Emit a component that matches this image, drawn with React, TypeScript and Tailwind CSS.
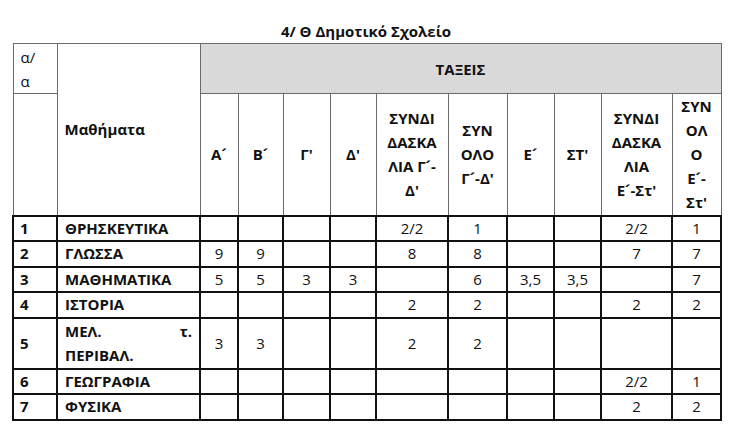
const COLS = [44, 143, 38, 45, 47, 46, 72, 59, 47, 47, 71, 49];

type Row = { n: string; name: React.ReactNode; v: string[]; tall?: boolean };

const ROWS: Row[] = [
  { n: "1", name: "ΘΡΗΣΚΕΥΤΙΚΑ", v: ["", "", "", "", "2/2", "1", "", "", "2/2", "1"] },
  { n: "2", name: "ΓΛΩΣΣΑ", v: ["9", "9", "", "", "8", "8", "", "", "7", "7"] },
  { n: "3", name: "ΜΑΘΗΜΑΤΙΚΑ", v: ["5", "5", "3", "3", "", "6", "3,5", "3,5", "", "7"] },
  { n: "4", name: "ΙΣΤΟΡΙΑ", v: ["", "", "", "", "2", "2", "", "", "2", "2"] },
  {
    n: "5",
    name: (
      <>
        <span className="flex justify-between">
          <span>ΜΕΛ.</span>
          <span>τ.</span>
        </span>
        <span className="block">ΠΕΡΙΒΑΛ.</span>
      </>
    ),
    v: ["3", "3", "", "", "2", "2", "", "", "", ""],
    tall: true,
  },
  { n: "6", name: "ΓΕΩΓΡΑΦΙΑ", v: ["", "", "", "", "", "", "", "", "2/2", "1"] },
  { n: "7", name: "ΦΥΣΙΚΑ", v: ["", "", "", "", "", "", "", "", "2", "2"] },
];

// each header cell, line by line as wrapped in the document
const HEAD: string[][] = [
  ["Α´"],
  ["Β´"],
  ["Γ'"],
  ["Δ'"],
  ["ΣΥΝΔΙ", "ΔΑΣΚΑ", "ΛΙΑ Γ´-", "Δ'"],
  ["ΣΥΝ", "ΟΛΟ", "Γ´-Δ'"],
  ["Ε´"],
  ["ΣΤ'"],
  ["ΣΥΝΔΙ", "ΔΑΣΚΑ", "ΛΙΑ", "Ε´-Στ'"],
  ["ΣΥΝ", "ΟΛ", "Ο", "Ε´-", "Στ'"],
];

const HC = "border border-[#6b6b6b]";
const BC = "border-2 border-[#111]";

export default function App() {
  return (
    <div
      className="h-[428px] w-[732px] bg-white text-[15px] leading-[24px] text-[#111]"
      style={{ fontFamily: '"Open Sans", "Noto Sans", sans-serif' }}
    >
      <div className="pt-[19px] text-center text-[15px] font-bold leading-[24px]">4/ Θ Δημοτικό Σχολείο</div>
      <table className="ml-[12px] table-fixed border-collapse" style={{ width: 708 }}>
        <colgroup>
          {COLS.map((w, i) => (
            <col key={i} style={{ width: w }} />
          ))}
        </colgroup>
        <thead>
          <tr className="h-[50px]">
            <td className={`${HC} px-[7px] pt-[1px] align-top`}>
              α/
              <br />α
            </td>
            <td rowSpan={2} className={`${HC} px-[7px] font-bold`}>
              Μαθήματα
            </td>
            <td colSpan={10} className={`${HC} bg-[#d9d9d9] text-center font-bold`}>
              ΤΑΞΕΙΣ
            </td>
          </tr>
          <tr className="h-[122px]">
            <td className={HC}></td>
            {HEAD.map((lines, i) => (
              <td key={i} className={`${HC} p-0 text-center font-bold`}>
                {lines.map((l, j) => (
                  <span key={j} className="block whitespace-nowrap">
                    {l}
                  </span>
                ))}
              </td>
            ))}
          </tr>
        </thead>
        <tbody className="leading-[21px]">
          {ROWS.map((r) => (
            <tr key={r.n} className={r.tall ? "h-[51px]" : "h-[25.5px]"}>
              <td className={`${BC} px-[6px] font-bold`}>{r.n}</td>
              <td className={`${BC} px-[7px] font-bold ${r.tall ? "leading-[24px]" : ""}`}>{r.name}</td>
              {r.v.map((v, i) => (
                <td key={i} className={`${BC} text-center`}>
                  {v}
                </td>
              ))}
            </tr>
          ))}
        </tbody>
      </table>
    </div>
  );
}
